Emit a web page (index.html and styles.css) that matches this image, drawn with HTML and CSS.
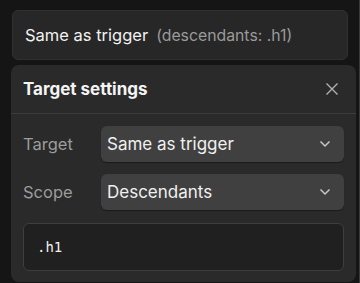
FILE: index.html
```html
<!DOCTYPE html>
<html lang="en">
<head>
    <meta charset="UTF-8">
    <meta name="viewport" content="width=device-width, initial-scale=1.0">
    <title>Target settings</title>
    <link rel="stylesheet" href="styles.css">
</head>
<body>

    <!-- Trigger summary -->
    <div class="resumo">
        <span class="resumo-valor">Same as trigger</span>
        <span class="resumo-extra">(descendants: .h1)</span>
    </div>

    <!-- Settings panel -->
    <div class="painel">
        <div class="painel-topo">
            <h2>Target settings</h2>
            <button class="fechar" aria-label="Close">
                <svg width="14" height="14" viewBox="0 0 14 14">
                    <path d="M1.5 1.5 L12.5 12.5 M12.5 1.5 L1.5 12.5" stroke="#b0b0b0" stroke-width="1.4" fill="none"/>
                </svg>
            </button>
        </div>
        <div class="painel-corpo">
            <div class="linha">
                <label>Target</label>
                <div class="seletor">
                    <span>Same as trigger</span>
                    <svg width="12" height="8" viewBox="0 0 12 8">
                        <path d="M1.5 1.5 L6 6 L10.5 1.5" stroke="#c8c8c8" stroke-width="1.5" fill="none"/>
                    </svg>
                </div>
            </div>
            <div class="linha">
                <label>Scope</label>
                <div class="seletor">
                    <span>Descendants</span>
                    <svg width="12" height="8" viewBox="0 0 12 8">
                        <path d="M1.5 1.5 L6 6 L10.5 1.5" stroke="#c8c8c8" stroke-width="1.5" fill="none"/>
                    </svg>
                </div>
            </div>
            <div class="codigo">.h1</div>
        </div>
    </div>

    <div class="barra"></div>

</body>
</html>
```

FILE: styles.css
```css
body {
    margin: 0;
    padding: 10px 0 0 0;
    background-color: #151515;
    font-family: Inter, "Noto Sans", sans-serif;
    color: #f0f0f0;
    height: 283px;
    box-sizing: border-box;
    overflow: hidden;
}
.resumo {
    margin-left: 12px;
    width: 336px;
    height: 50px;
    box-sizing: border-box;
    padding: 0 12px;
    display: flex;
    align-items: center;
    gap: 8px;
    background-color: #272727;
    border: 1px solid #303030;
    border-radius: 6px;
}
.resumo-valor {
    font-size: 16.5px;
    color: #f2f2f2;
}
.resumo-extra {
    font-size: 15.8px;
    color: #9a9a9a;
}
.painel {
    margin: 5px 0 0 11px;
    width: 345px;
    background-color: #2a2a2a;
    border-radius: 8px;
    padding-bottom: 11px;
}
.painel-topo {
    height: 48px;
    display: flex;
    align-items: center;
    justify-content: space-between;
    padding: 0 12px;
    border-bottom: 1px solid #3c3c3c;
}
.painel-topo h2 {
    margin: 0;
    font-size: 17px;
    font-weight: 700;
    color: #f4f4f4;
}
.fechar {
    background: none;
    border: none;
    padding: 0;
    margin-right: 5px;
    width: 14px;
    height: 14px;
    display: flex;
    cursor: pointer;
}
.painel-corpo {
    padding: 12px 12px 0 12px;
    display: flex;
    flex-direction: column;
    gap: 12px;
}
.linha {
    display: flex;
    align-items: center;
}
.linha label {
    width: 78px;
    font-size: 16.5px;
    color: #9c9c9c;
}
.seletor {
    flex: 1;
    height: 36px;
    box-sizing: border-box;
    padding: 0 13px 0 6px;
    display: flex;
    align-items: center;
    justify-content: space-between;
    background-color: #404040;
    border-radius: 6px;
    box-shadow: 0 1px 1px rgba(0, 0, 0, 0.35);
    font-size: 17px;
    color: #f0f0f0;
}
.codigo {
    margin-top: 1px;
    height: 48px;
    box-sizing: border-box;
    padding: 0 13px;
    display: flex;
    align-items: center;
    background-color: #202020;
    border: 1px solid #3e3e3e;
    border-radius: 6px;
    font-family: "DejaVu Sans Mono", monospace;
    font-size: 14px;
    color: #f0f0f0;
}
.barra {
    position: absolute;
    top: 0;
    right: 0;
    width: 1px;
    height: 283px;
    background-color: #3a3a3a;
}
```
